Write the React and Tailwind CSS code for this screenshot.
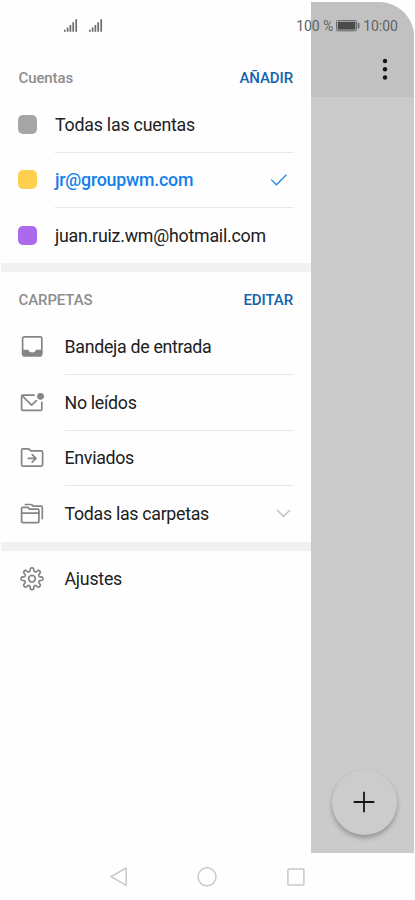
import React from 'react';

const ACCOUNTS = [
    { name: 'Todas las cuentas', color: 'bg-[#a5a5a5]' },
    { name: 'jr@groupwm.com', color: 'bg-[#ffd04f]', selected: true },
    { name: 'juan.ruiz.wm@hotmail.com', color: 'bg-[#ab69ec]' },
];

// Outline of the settings gear: a circle whose radius swells into eight rounded teeth
const GEAR_PATH = Array.from({ length: 161 }, (_, i) => {
    const angle = (i / 160) * Math.PI * 2;
    const radius = 9.2 + 1.75 * Math.tanh(2 * Math.cos(angle * 8));
    const x = 13 + radius * Math.sin(angle);
    const y = 12.7 - radius * Math.cos(angle);
    return `${i ? 'L' : 'M'}${x.toFixed(2)} ${y.toFixed(2)}`;
}).join('') + 'Z';

// Shared frame for the grey line icons of the drawer
const LineIcon = ({ children }) => (
    <svg width="26" height="26" viewBox="0 0 26 26" fill="none" stroke="#858585" strokeWidth="1.7" strokeLinecap="round" strokeLinejoin="round" className="shrink-0">
        {children}
    </svg>
);

const InboxIcon = () => (
    <LineIcon>
        <rect x="4.6" y="2.8" width="19.2" height="18.8" rx="1.5" />
        <path d="M4.6 15.8H10.4C11 19.4 17.4 19.4 18 15.8H23.8V21.4Q23.8 22.4 22.8 22.4H5.6Q4.6 22.4 4.6 21.4Z" fill="#858585" stroke="none" />
    </LineIcon>
);

const UnreadIcon = () => (
    <LineIcon>
        <path d="M16 5.2H4.8Q3.6 5.2 3.6 6.4V19.2Q3.6 20.4 4.8 20.4H22.6Q23.8 20.4 23.8 19.2V12.4" />
        <path d="M4.4 6L13.6 15.2L18.4 10.6" />
        <circle cx="22.5" cy="6.3" r="3.4" fill="#858585" stroke="none" />
    </LineIcon>
);

const SentIcon = () => (
    <LineIcon>
        <path d="M3.6 5.2Q3.6 3.9 4.9 3.9H10.1Q11 3.9 11.6 4.6L12.2 5.3Q12.8 5.9 13.7 5.9H23.3Q24.6 5.9 24.6 7.2V19.8Q24.6 21.1 23.3 21.1H4.9Q3.6 21.1 3.6 19.8Z" />
        <path d="M10.3 13.4H17.7M14.2 9.6L18 13.4L14.2 17.2" />
    </LineIcon>
);

const FoldersIcon = () => (
    <LineIcon>
        <path d="M3.6 7.6Q3.6 6.4 4.8 6.4H9.3Q10.1 6.4 10.6 7L11.1 7.6Q11.6 8.2 12.4 8.2H19.7Q20.9 8.2 20.9 9.4V20.4Q20.9 21.6 19.7 21.6H4.8Q3.6 21.6 3.6 20.4Z" />
        <path d="M3.6 12.2H20.9" />
        <path d="M7.4 3.5H13Q13.8 3.5 14.3 4.1L14.7 4.6Q15.2 5.2 16 5.2H23.1Q24.3 5.2 24.3 6.4V17.6" />
    </LineIcon>
);

const GearIcon = () => (
    <LineIcon>
        <path d={GEAR_PATH} />
        <circle cx="13" cy="12.7" r="3.3" />
    </LineIcon>
);

const FOLDERS = [
    { name: 'Bandeja de entrada', Icon: InboxIcon },
    { name: 'No leídos', Icon: UnreadIcon },
    { name: 'Enviados', Icon: SentIcon },
    { name: 'Todas las carpetas', Icon: FoldersIcon, expandable: true },
];

const SignalIcon = () => (
    <svg width="15" height="14" viewBox="0 0 15 14" stroke="#6b6b6b" strokeWidth="1.7">
        <path d="M1.8 12.8V10.7M4.6 12.8V8.5M7.4 12.8V6M10.2 12.8V3.3M13.2 12.8V0.3" />
    </svg>
);

const BatteryIcon = () => (
    <svg width="24" height="12" viewBox="0 0 24 12" fill="none">
        <rect x="0.6" y="0.6" width="20" height="10.2" rx="1" stroke="#666666" strokeWidth="1" />
        <rect x="1.8" y="1.8" width="17.6" height="7.8" fill="#4b4b4b" />
        <path d="M22.6 2.9V8.5" stroke="#666666" strokeWidth="1.6" />
    </svg>
);

const StatusBar = () => (
    <div className="absolute inset-x-0 top-[15px] flex h-[22px] items-center pr-[17px] pl-[63px] text-[14px] text-[#626262]">
        <div className="flex flex-1 gap-[10px]">
            <SignalIcon />
            <SignalIcon />
        </div>
        <span className="tracking-[-0.1px]">100 %</span>
        <span className="mr-[3px] ml-[3px]"><BatteryIcon /></span>
        <span>10:00</span>
    </div>
);

const SectionHeader = ({ title, action }) => (
    <div className="flex items-center justify-between pr-[18px] pl-[17.5px] text-[15px] font-medium tracking-[-0.1px]">
        <h2 className="text-[#8d8d8d]">{title}</h2>
        <button className="text-[#1462ae]">{action}</button>
    </div>
);

const Drawer = () => (
    <aside className="ml-px w-[310px] pt-[60px] text-[#202020]">
        <div className="h-[37.5px] pt-[8px]"><SectionHeader title="Cuentas" action="AÑADIR" /></div>
        {ACCOUNTS.map(({ name, color, selected }, i) => (
            <div key={name} className="flex h-[55.3px] items-center pr-[18px] pl-[17.4px]">
                <span className={`mb-px size-[19px] rounded-[5px] ${color}`} />
                <div className={`ml-[17.6px] flex h-full flex-1 items-center justify-between text-[17.8px] tracking-[-0.22px] ${i < 2 ? 'border-b border-[#e6e6e6]' : ''}`}>
                    <span className={selected ? 'font-medium text-[#127fea]' : ''}>{name}</span>
                    {selected && (
                        <svg width="18" height="14" viewBox="0 0 18 14" fill="none" stroke="#2487df" strokeWidth="1.3" className="mr-[5px]">
                            <path d="M1.2 6.6L6.4 11.8L16.4 1.8" />
                        </svg>
                    )}
                </div>
            </div>
        ))}
        <div className="h-[9px] bg-[#f1f1f1]" />
        <div className="h-[47.2px] pt-[17.6px]"><SectionHeader title="CARPETAS" action="EDITAR" /></div>
        {FOLDERS.map(({ name, Icon, expandable }) => (
            <div key={name} className="flex h-[55.5px] items-center pr-[18px] pl-[17px]">
                <Icon />
                <div className={`ml-[20.5px] flex h-full flex-1 items-center justify-between ${expandable ? '' : 'border-b border-[#e6e6e6]'}`}>
                    <span className="pt-px text-[17.8px] tracking-[-0.3px]">{name}</span>
                    {expandable && (
                        <svg width="15" height="9" viewBox="0 0 15 9" fill="none" stroke="#c4c4c4" strokeWidth="1.5" className="mr-[2px] mb-px">
                            <path d="M1 1L7.5 7.4L14 1" />
                        </svg>
                    )}
                </div>
            </div>
        ))}
        <div className="h-[9px] bg-[#f1f1f1]" />
        <div className="flex h-[56px] items-center gap-[19.5px] pl-[18px]">
            <GearIcon />
            <span className="pt-px text-[17.8px] tracking-[-0.25px]">Ajustes</span>
        </div>
    </aside>
);

// Dimmed strip of the inbox that stays visible behind the drawer
const DimmedInbox = () => (
    <div className="mt-[2px] flex h-[851px] w-[103px] flex-col overflow-hidden rounded-tr-[35px] bg-[#cbcbcb]">
        <div className="flex h-[95px] justify-end bg-[#c1c1c1] pt-[56px] pr-[26px]">
            <svg width="6" height="22" viewBox="0 0 6 22" fill="#151515">
                <circle cx="3" cy="3" r="2.2" />
                <circle cx="3" cy="11.2" r="2.2" />
                <circle cx="3" cy="19.5" r="2.2" />
            </svg>
        </div>
        <div className="mt-auto mr-[17.5px] mb-[18.5px] flex size-[65px] items-center justify-center self-end rounded-full bg-[#cccccc] shadow-[0_3px_5px_rgba(0,0,0,0.28)]">
            <svg width="22" height="22" viewBox="0 0 22 22" stroke="#151515" strokeWidth="1.8">
                <path d="M11 0.7V21.3M0.7 11H21.3" />
            </svg>
        </div>
    </div>
);

const NavigationBar = () => (
    <nav className="flex h-[47px] items-center gap-[69.3px] pl-[109px]">
        <svg width="19" height="20" viewBox="0 0 19 20" fill="none" stroke="#c8c8c8" strokeWidth="1.5" strokeLinejoin="round">
            <path d="M17.2 1V18.4L2 9.6Z" />
        </svg>
        <svg width="20" height="20" viewBox="0 0 20 20" fill="none" stroke="#c8c8c8" strokeWidth="1.5">
            <circle cx="10" cy="9.8" r="9" />
        </svg>
        <svg width="18" height="18" viewBox="0 0 18 18" fill="none" stroke="#c8c8c8" strokeWidth="1.5">
            <rect x="0.9" y="0.9" width="16" height="16" rx="0.8" />
        </svg>
    </nav>
);

const App = () => (
    <div className="relative h-[900px] w-[415px] overflow-hidden bg-[#fefefe] font-['Roboto',sans-serif] leading-[20px]">
        <div className="flex h-[853px]">
            <Drawer />
            <DimmedInbox />
        </div>
        <NavigationBar />
        <StatusBar />
    </div>
);

export default App;
